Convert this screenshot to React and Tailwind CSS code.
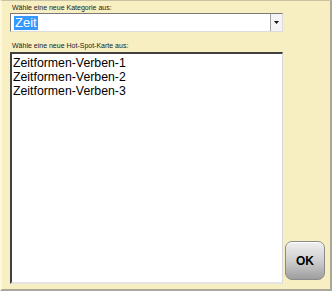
export default function App() {
  const items = ["Zeitformen-Verben-1", "Zeitformen-Verben-2", "Zeitformen-Verben-3"];
  return (
    <div
      className="w-[332px] h-[291px] bg-[#f7efc1] border-t border-t-[#c9c3a4] border-r-2 border-r-[#aaa89c] border-b-2 border-b-[#aaa89c] border-l-2 border-l-[#fdf8dc] box-border flex flex-col pl-[8px]"
      style={{ fontFamily: '"Liberation Sans", Arial, sans-serif' }}
    >
      <div className="text-[7px] leading-[8px] text-[#222] mt-[3px] pl-[2px] h-[9px]">Wähle eine neue Kategorie aus:</div>
      <div className="w-[273px] h-[19px] bg-white border border-t-[#7a7a7a] border-l-[#7a7a7a] border-r-[#dcdcdc] border-b-[#dcdcdc] box-border flex items-stretch">
        <div className="flex-1 flex items-center pl-[3px]">
          <span className="bg-[#3399ff] text-white text-[13px] leading-[14px] px-[1px]">Zeit</span>
        </div>
        <div className="w-[12px] border-l border-l-[#a0a0a0] bg-[#f4f4f4] flex items-center justify-center">
          <svg width="5" height="3" viewBox="0 0 5 3"><path d="M0 0h5L2.5 3z" fill="#111" /></svg>
        </div>
      </div>
      <div className="text-[7px] leading-[8px] text-[#222] mt-[10px] pl-[2px] h-[10px]">Wähle eine neue Hot-Spot-Karte aus:</div>
      <div className="flex flex-row items-end gap-[2px]">
        <div className="w-[273px] h-[232px] bg-white border-t-2 border-t-[#404040] border-l-2 border-l-[#404040] border-r border-r-[#d8d8d8] border-b-2 border-b-[#e4e4e4] box-border pt-[2px] pl-[1px]">
          {items.map((t) => (
            <div key={t} className="text-[12.3px] leading-[14px] text-black">{t}</div>
          ))}
        </div>
        <button className="w-[40px] h-[39px] mb-[4px] rounded-[7px] border border-[#8a8a8a] bg-gradient-to-b from-[#f0f0f0] via-[#cfcfcf] to-[#9e9e9e] shadow-[inset_0_1px_0_#ffffff] flex items-center justify-center text-[12px] font-bold text-black">
          OK
        </button>
      </div>
    </div>
  );
}
